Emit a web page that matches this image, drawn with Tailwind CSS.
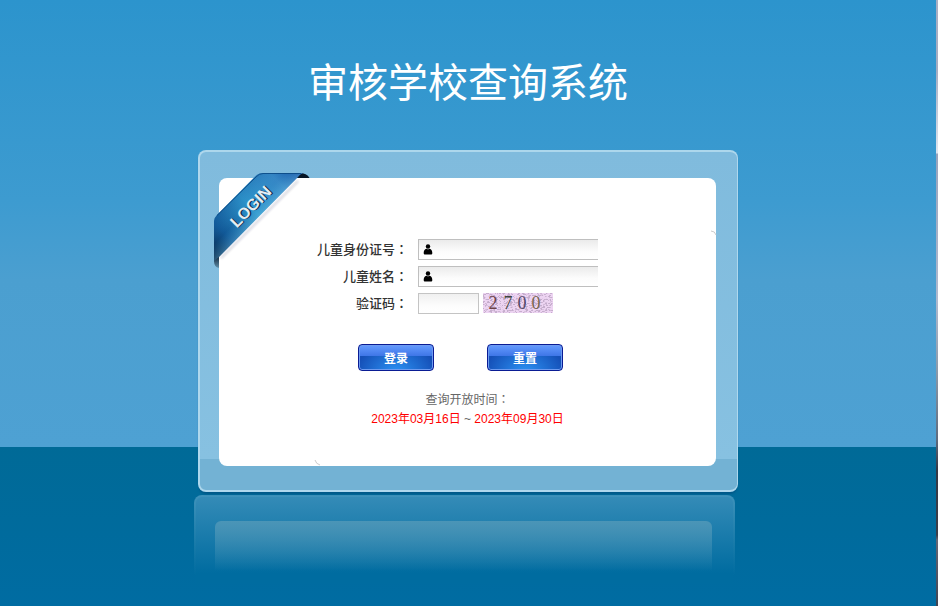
<!DOCTYPE html>
<html lang="zh-CN">
<head>
<meta charset="utf-8">
<meta name="viewport" content="width=device-width, initial-scale=1">
<title>审核学校查询系统</title>
<script src="https://cdn.jsdelivr.net/npm/@tailwindcss/browser@4"></script>
</head>
<body class="flex min-h-screen font-['Noto_Sans_CJK_SC',sans-serif] text-xs text-[#333]">
<div class="flex flex-1 flex-col items-center overflow-hidden bg-[linear-gradient(#2c94cd_0px,#3d9bd0_200px,#4b9fd0_280px,#4ea1d3_447px,#006a97_447px,#006ca2_606px)]">
  <h1 class="mt-[56px] text-[40px] leading-12 font-normal text-white">审核学校查询系统</h1>

  <main class="relative mt-[46px] w-full max-w-[540px] rounded-lg border-2 border-r border-[#b4daee]/90 bg-[linear-gradient(#80bbdd_0px,#87c1e1_307px,#73b2d4_307px)] pt-[26px] pr-[21px] pb-[24px] pl-[19px] shadow-[0_3px_2px_-1px_#005888]">
    <form class="relative flex flex-col rounded-lg bg-white pt-[61px] pb-[37px]" onsubmit="return false">
      <div class="grid grid-cols-[189px_1fr] items-start gap-x-[10px] gap-y-[6px] text-[13px] leading-5 font-medium">
        <label for="idno" class="text-right">儿童身份证号<span class="font-['Noto_Sans_CJK_TC',sans-serif]" lang="zh-TW">：</span></label>
        <div class="relative w-[180px]">
          <input id="idno" type="text" class="block h-[21px] w-full border border-r-0 border-[#bfbfbf] bg-[linear-gradient(#ebebeb,#fcfcfc_60%,#fff)] pl-5 outline-none">
          <svg class="absolute top-[5px] left-[5px]" width="10" height="11" viewBox="0 0 10 11" aria-hidden="true"><ellipse cx="5" cy="2.5" rx="2.2" ry="2.2"/><path d="M3.500 4.800q1.500 1 3 0c2 .5 2.800 2.200 2.800 4.200 0 1-.5 1.500-1.500 1.500H2.200C1.200 10.500.7 10 .7 9c0-2 .8-3.700 2.800-4.200z"/></svg>
        </div>
        <label for="name" class="text-right">儿童姓名<span class="font-['Noto_Sans_CJK_TC',sans-serif]" lang="zh-TW">：</span></label>
        <div class="relative w-[180px]">
          <input id="name" type="text" class="block h-[21px] w-full border border-r-0 border-[#bfbfbf] bg-[linear-gradient(#ebebeb,#fcfcfc_60%,#fff)] pl-5 outline-none">
          <svg class="absolute top-[5px] left-[5px]" width="10" height="11" viewBox="0 0 10 11" aria-hidden="true"><ellipse cx="5" cy="2.5" rx="2.2" ry="2.2"/><path d="M3.500 4.800q1.500 1 3 0c2 .5 2.800 2.200 2.800 4.200 0 1-.5 1.500-1.500 1.500H2.200C1.200 10.500.7 10 .7 9c0-2 .8-3.700 2.800-4.200z"/></svg>
        </div>
        <label for="code" class="text-right">验证码<span class="font-['Noto_Sans_CJK_TC',sans-serif]" lang="zh-TW">：</span></label>
        <div class="flex items-start gap-1">
          <input id="code" type="text" class="block h-[21px] w-[61px] border border-[#c4c4c4] bg-[linear-gradient(#f0f0f0,#fcfcfc_60%,#fff)] outline-none">
          <svg width="70" height="20" viewBox="0 0 70 20" class="font-['Liberation_Serif',serif] text-lg">
            <defs>
              <filter id="noise" x="0" y="0" width="100%" height="100%">
                <feTurbulence type="fractalNoise" baseFrequency=".4 .75" numOctaves="3" seed="7"/>
                <feColorMatrix values="0 0 0 0 .42  0 0 0 0 .3  0 0 0 0 .46  9 6 0 0 -7.500"/>
              </filter>
            </defs>
            <rect width="70" height="20" fill="#edd4f2"/>
            <rect width="70" height="20" filter="url(#noise)" opacity=".6"/>
            <g font-weight="400" text-anchor="middle">
              <text x="10" y="16" fill="#6b4147">2</text>
              <text x="25" y="16" fill="#3e4640">7</text>
              <text x="39" y="16" fill="#514868">0</text>
              <text x="53" y="16" fill="#77664f">0</text>
            </g>
          </svg>
        </div>
      </div>

      <div class="mt-[30px] flex justify-center gap-[53px] pr-[14px]">
        <button type="submit" class="h-[27px] w-[76px] rounded-[4px] border border-[#0a1c94] bg-[linear-gradient(#659bff,#3d75e6_45%,transparent_45%),radial-gradient(ellipse_at_50%_110%,#2c93f4,#1550b8_75%)] text-xs leading-6 font-bold text-white shadow-[inset_0_0_0_1px_#6e9bf0]">登录</button>
        <button type="reset" class="h-[27px] w-[76px] rounded-[4px] border border-[#0a1c94] bg-[linear-gradient(#659bff,#3d75e6_45%,transparent_45%),radial-gradient(ellipse_at_50%_110%,#2c93f4,#1550b8_75%)] text-xs leading-6 font-bold text-white shadow-[inset_0_0_0_1px_#6e9bf0]">重置</button>
      </div>

      <div class="mt-[18px] text-center leading-5 text-[#666]">
        <p>查询开放时间<span class="font-['Noto_Sans_CJK_TC',sans-serif]" lang="zh-TW">：</span></p>
        <p class="font-['Liberation_Sans','Noto_Sans_CJK_SC',sans-serif]"><span class="text-[#f00]">2023年03月16日</span> ~ <span class="text-[#f00]">2023年09月30日</span></p>
      </div>

      <svg class="absolute -top-[8px] -left-[9px]" width="112" height="104" viewBox="210 170 112 104" role="img" aria-label="LOGIN">
        <defs>
          <linearGradient id="ribbon" gradientUnits="userSpaceOnUse" x1="212" y1="256" x2="300" y2="168">
            <stop offset="0" stop-color="#031c3c"/><stop offset=".2" stop-color="#0c4f8f"/><stop offset=".5" stop-color="#2c93ca"/><stop offset=".8" stop-color="#3583c3"/><stop offset="1" stop-color="#0b429a"/>
          </linearGradient>
          <linearGradient id="gloss" gradientUnits="userSpaceOnUse" x1="235" y1="195" x2="258" y2="218">
            <stop offset="0" stop-color="#1c66a8" stop-opacity=".35"/><stop offset=".6" stop-color="#3aa4d6" stop-opacity=".1"/><stop offset="1" stop-color="#7fd0ee" stop-opacity=".35"/>
          </linearGradient>
          <linearGradient id="fold" x1="0" y1="0" x2="0" y2="1"><stop offset="0" stop-color="#05162a"/><stop offset="1" stop-color="#5f8ea8"/></linearGradient>
          <filter id="soft"><feGaussianBlur stdDeviation="1"/></filter>
        </defs>
        <path d="M221 258L298 181" stroke="#335" stroke-opacity=".2" stroke-width="2" filter="url(#soft)"/>
        <path d="M299 173q8 0 10.500 5H296z" fill="#061525"/>
        <path d="M214 256l5-2v14q-5-1-5-7z" fill="url(#fold)"/>
        <path d="M214 221q0-3 3-6L255 176.500q3-3.500 8-3.500h40q-3 1-6 5L219 257q-5 4-5 5z" fill="url(#ribbon)"/>
        <path d="M214 221q0-3 3-6L255 176.500q3-3.500 8-3.500h40q-3 1-6 5L219 257q-5 4-5 5z" fill="url(#gloss)"/>
        <path d="M217 215.500L256 177q3-3.500 7-3.500h38" fill="none" stroke="#07457f" stroke-opacity=".8"/>
        <g transform="translate(251 207) rotate(-45)" text-anchor="middle" class="font-['Liberation_Sans',sans-serif] text-[16px] font-bold">
          <text x="1" y="6" fill="#0b2c4a" aria-hidden="true">LOGIN</text><text x="0" y="5" fill="#e4edf3">LOGIN</text>
        </g>
      </svg>
      <svg class="absolute top-[52px] -right-px" width="7" height="7" aria-hidden="true"><path d="M1 1q4 0 5 4" fill="none" stroke="#ccc"/></svg>
      <svg class="absolute bottom-0 left-[95px]" width="7" height="7" aria-hidden="true"><path d="M1 1q1 4 5 5" fill="none" stroke="#ccc"/></svg>
    </form>
  </main>

  <div aria-hidden="true" class="mt-[3px] mr-[7px] h-[90px] w-full max-w-[541px] rounded-t-lg bg-[linear-gradient(#3e92bb,#3e92bb00_80px)] p-[2px]">
    <div class="h-full rounded-t-md bg-[linear-gradient(#348bb7,#006ca0_76px)] pt-[24px] pr-[21px] pl-[19px]">
      <div class="h-[56px] rounded-t-md bg-[linear-gradient(#4b95b7,#4b95b700_50px)]"></div>
    </div>
  </div>
</div>
<div aria-hidden="true" class="w-[2px] bg-[linear-gradient(#a9afc4_0px,#a5adc2_70px,#dfe6f0_153px,#98a4bd_154px,#b0bacf_300px,#8b9bab_370px,#5d6b7e_440px,#343845_470px,#3b3e49_535px,#646775_540px,#3f4453_606px)]"></div>
</body>
</html>
